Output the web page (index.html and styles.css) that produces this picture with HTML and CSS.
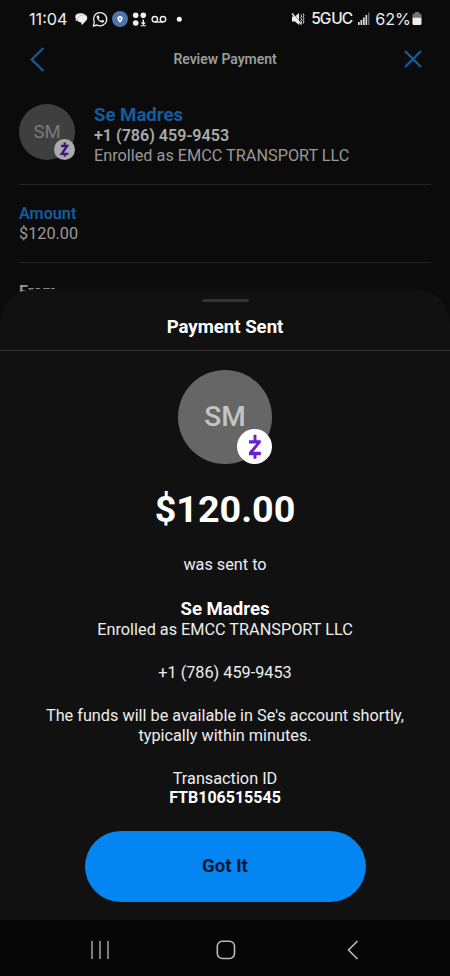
FILE: index.html
```html
<!DOCTYPE html>
<html lang="en">
<head>
<meta charset="utf-8">
<meta name="viewport" content="width=device-width, initial-scale=1">
<title>Payment Sent</title>
<link rel="stylesheet" href="styles.css">
</head>
<body>
<div class="phone">
  <div class="status">
    <span class="clock">11:04</span>
    <svg class="status-left" width="110" height="18" viewBox="0 0 110 18">
      <path d="M2.200 9.200C.3 6.500 1.500 3.200 6 3.200C9 3.200 10.500 3.700 11.500 5C13.800 6 13.900 10 11.300 11.500L7.800 15.300L7.200 12.400C5 12.300 4 11.700 3.500 10.500L1 10.700Z" fill="#eee"/>
      <path d="M3.800 9.500C3 6 7 4.600 11.500 5.200" fill="none" stroke="#999" stroke-width=".5"/>
      <path d="M19.300 16L20.300 12.300A6.600 6.600 0 1 1 23 15Z" fill="none" stroke="#eee" stroke-width="1.300" stroke-linejoin="round"/>
      <path d="M23.500 5.500C22.500 6 22.300 7.500 23.500 9.300C25 11.500 27.500 13.300 29.300 12.300C30.200 11.800 30.300 10.800 30 10.600L28.300 9.800L27.300 10.900C26 10.300 25.200 9.400 24.700 8.400L25.500 7.500L24.800 5.600Z" fill="#eee"/>
      <circle cx="46" cy="9" r="8" fill="#4e75a9"/>
      <path d="M46 12.500C42.300 9.800 42.700 6 46 6S49.700 9.800 46 12.500Z" fill="#fff"/>
      <circle cx="46" cy="8.700" r=".9" fill="#4e75a9"/>
      <g fill="#eee"><circle cx="61.700" cy="5.300" r="2.800"/><circle cx="69.300" cy="5.300" r="2.800"/><circle cx="61.700" cy="13" r="2.800"/><path d="M68.600 9.500h1.400v3h2l-2.700 2.800l-2.700-2.800h2zM66.600 15.300h5.400v1h-5.400z"/></g>
      <g fill="none" stroke="#eee" stroke-width="1.400"><circle cx="80.800" cy="9.200" r="2.700"/><circle cx="89" cy="9.200" r="2.700"/><path d="M80.800 12H89"/></g>
      <circle cx="105.300" cy="9.200" r="2.500" fill="#fff"/>
    </svg>
    <span class="spacer"></span>
    <svg width="14" height="14" viewBox="0 0 14 14">
      <path d="M1 4.500h3L8 1v12L4 9.500H1z" fill="#eee"/>
      <path d="M9.700 2.500l1 1.500-1 1.500 1 1.500-1 1.500 1 1.500-1 1.500M12 1.500l1 1.700-1 1.700 1 1.700-1 1.700 1 1.700-1 1.700" fill="none" stroke="#ddd" stroke-width="1"/>
      <path d="M2.300 1.500l8 10" stroke="#0b0b0b" stroke-width=".7"/><path d="M1 1.500l9.500 11" stroke="#eee" stroke-width="1.300"/>
    </svg>
    <span class="network">5G</span><span class="network uc">UC</span>
    <svg class="signal" width="12" height="13" viewBox="0 0 12 13"><path d="M0 10h1.700v3H0zM2.500 8h1.700v5H2.500zM5 5.500h1.700V13H5zM7.500 3h1.700v10H7.500z" fill="#ddd"/><path d="M10 .5h1.500V13H10z" fill="#666"/></svg>
    <span class="percent">62%</span>
    <svg class="battery" width="10" height="13" viewBox="0 0 10 13"><path d="M3 0h4v1.500h1.500Q9.500 1.500 9.500 3v2.500h-9V3Q.5 1.500 1.500 1.500H3z" fill="#747474"/><path d="M.5 5.500h9v6Q9.500 13 8 13H2Q.5 13 .5 11.500z" fill="#eee"/></svg>
  </div>

  <header class="nav">
    <svg width="16" height="26" viewBox="0 0 16 26"><path d="M13.500 2L1.700 13.500L13.500 25" fill="none" stroke="#155c9e" stroke-width="2.200"/></svg>
    <h1>Review Payment</h1>
    <svg width="18" height="18" viewBox="0 0 18 18"><path d="M1 1L17 17M17 1L1 17" fill="none" stroke="#155c9e" stroke-width="2.300"/></svg>
  </header>

  <main class="review">
    <section class="payee">
      <div class="avatar avatar-small">SM
        <span class="badge"><svg viewBox="0 0 36 36"><path d="M12 12H22.500L13.300 25.500H24.500M18.500 6V11.500M18.500 26V30" fill="none" stroke="currentColor" stroke-width="4"/></svg></span>
      </div>
      <div class="payee-text">
        <h2>Se Madres</h2>
        <strong>+1 (786) 459-9453</strong>
        <span>Enrolled as EMCC TRANSPORT LLC</span>
      </div>
    </section>
    <section class="field">
      <h3>Amount</h3>
      <span>$120.00</span>
    </section>
    <section class="from">From</section>
  </main>

  <section class="sheet">
    <div class="sheet-head">
      <span class="handle"></span>
      <h2>Payment Sent</h2>
    </div>
    <div class="receipt">
      <div class="avatar avatar-large">SM
        <span class="badge"><svg viewBox="0 0 36 36"><path d="M12.300 11.500H24.500V14L16.800 23.500H24.500V27H12.300V24L20 15H12.300ZM17 6H20V12H17ZM17 26H20V30.500H17Z" fill="currentColor"/></svg></span>
      </div>
      <div class="total">$120.00</div>
      <p class="sent">was sent to</p>
      <h3>Se Madres</h3>
      <p>Enrolled as EMCC TRANSPORT LLC</p>
      <p class="gap">+1 (786) 459-9453</p>
      <p class="gap">The funds will be available in Se's account shortly,<br>typically within minutes.</p>
      <p class="gap">Transaction ID</p>
      <strong>FTB106515545</strong>
      <button type="button">Got It</button>
    </div>
  </section>

  <footer class="system-nav">
    <svg width="18" height="20" viewBox="0 0 18 20"><path d="M1 1v18M9 1v18M17 1v18" stroke="#999" stroke-width="1.600"/></svg>
    <svg class="home" width="20" height="20" viewBox="0 0 20 20"><rect x="1.300" y="1.300" width="17.200" height="17.200" rx="5" fill="none" stroke="#bbb" stroke-width="1.600"/></svg>
    <svg width="12" height="20" viewBox="0 0 12 20"><path d="M10.500 1L1.500 10L10.500 19" fill="none" stroke="#bbb" stroke-width="1.600"/></svg>
  </footer>
</div>
</body>
</html>
```
FILE: styles.css
```css
* { box-sizing: border-box; }
body { margin: 0; background: #0b0b0b; font-family: Roboto, sans-serif; }
h1, h2, h3, p { margin: 0; }
svg { display: block; flex: none; }

.phone {
  position: relative;
  display: flex;
  flex-direction: column;
  width: 450px;
  height: 976px;
  overflow: hidden;
  background: #0b0b0b;
  font-size: 16.25px;
  line-height: 19.6px;
}

.status {
  display: flex;
  align-items: center;
  height: 37px;
  padding: 0 28px 0 29px;
  color: #eee;
  white-space: nowrap;
}
.clock { width: 45px; font: 16.2px/20px Inter, sans-serif; }
.spacer { flex: 1; }
.network { margin-left: 6px; font: 500 15.5px/20px Inter, sans-serif; letter-spacing: -1px; }
.uc { margin-left: 1px; }
.signal { margin-left: 6px; }
.percent { margin-left: 5px; font: 16.2px/20px Inter, sans-serif; }
.battery { margin-left: 1px; }

.nav {
  display: flex;
  align-items: center;
  justify-content: space-between;
  height: 44px;
  padding: 0 28px 0 30px;
}
.nav h1 { padding-top: 1px; color: #9c9c9c; font-size: 14px; font-weight: 600; letter-spacing: -.05px; }

.review { flex: 1; padding: 0 19px; color: #999; }
.payee { display: flex; height: 104px; padding-top: 23px; border-bottom: 1px solid #252525; }
.payee-text { display: flex; flex-direction: column; padding: 0 0 0 19px; }
.payee h2 { color: #155c9e; font-size: 18.6px; line-height: 22px; font-weight: 700; }
.payee strong { font-weight: 600; font-size: 16.1px; color: #aaa; }
.field { display: flex; flex-direction: column; height: 78px; padding-top: 19px; border-bottom: 1px solid #252525; }
.field h3 { color: #155c9e; font-size: 16.2px; line-height: 20px; font-weight: 600; }
.from { padding-top: 19px; font-weight: 600; }

.avatar {
  position: relative;
  display: flex;
  flex: none;
  align-items: center;
  justify-content: center;
  border-radius: 50%;
}
.badge { position: absolute; right: 0; bottom: 0; border-radius: 50%; }
.badge svg { width: 100%; height: 100%; }
.avatar-small { width: 56px; height: 56px; background: #3f3f3f; color: #7a7a7a; font-size: 18.5px; line-height: 21px; }
.avatar-small .badge { width: 21px; height: 21px; background: #aaa; color: #431482; }
.avatar-large { width: 94px; height: 94px; background: #666; color: #c4c4c4; font-size: 28px; font-weight: 500; }
.avatar-large .badge { width: 35px; height: 35px; background: #fff; color: #6a1fce; }

.sheet {
  position: absolute;
  top: 289px;
  left: 0;
  width: 450px;
  height: 631px;
  border-radius: 34px 34px 0 0;
  background: #111;
  color: #eee;
}
.sheet-head {
  display: flex;
  flex-direction: column;
  align-items: center;
  height: 62px;
  padding-top: 10px;
  border-bottom: 1px solid #333;
}
.handle { width: 47px; height: 3px; border-radius: 2px; background: #333; }
.sheet-head h2 { margin-top: 13.5px; color: #fff; font-size: 18.6px; line-height: 22px; font-weight: 700; }
.receipt { display: flex; flex-direction: column; align-items: center; padding-top: 19px; text-align: center; }
.total { margin-top: 22px; color: #fff; font-size: 37.7px; line-height: 46px; font-weight: 700; }
.sent { margin-top: 23px; }
.receipt h3 { margin-top: 23.4px; color: #fff; font-size: 18.6px; line-height: 22px; font-weight: 700; }
.receipt .gap { margin-top: 23.4px; }
.receipt strong { color: #fff; font-size: 16px; font-weight: 700; }
button {
  width: 281px;
  height: 71px;
  margin-top: 22.8px;
  padding: 0;
  border: 0;
  border-radius: 36px;
  background: #0385f2;
  color: #061632;
  font: 700 18.6px/22px Roboto, sans-serif;
}

.system-nav {
  display: flex;
  align-items: center;
  justify-content: space-between;
  height: 56px;
  padding: 3px 91px 0 91px;
  background: #060606;
}
.home { margin-right: 5px; }
```
